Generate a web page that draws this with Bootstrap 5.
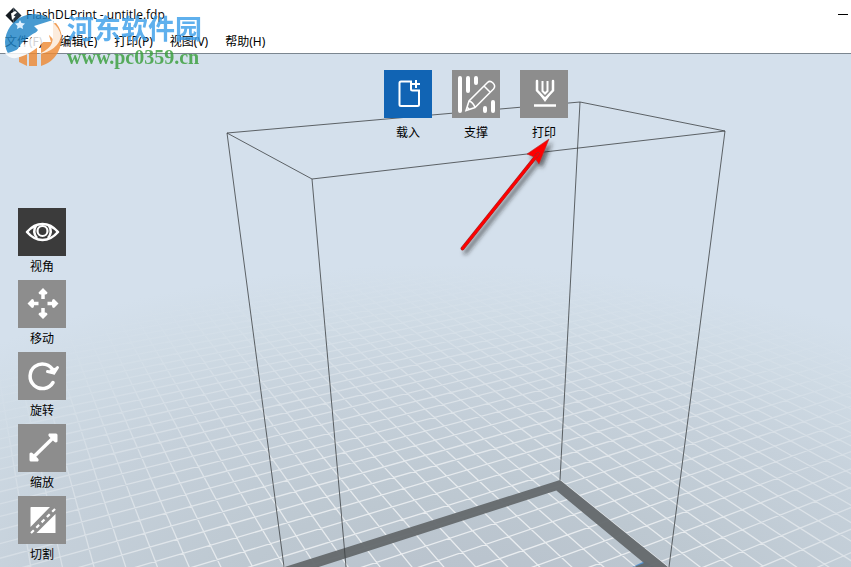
<!DOCTYPE html>
<html lang="zh-CN">
<head>
<meta charset="utf-8">
<meta name="viewport" content="width=device-width, initial-scale=1">
<title>FlashDLPrint - untitle.fdp</title>
<link href="https://cdn.jsdelivr.net/npm/bootstrap@5.3.0/dist/css/bootstrap.min.css" rel="stylesheet">
<style>
body{font-family:"Open Sans","Noto Sans CJK SC",sans-serif;font-size:12px;line-height:20px;color:#000}
.titlebar{height:30px;padding-left:5px}
.menubar{height:23px;padding-left:5px;gap:17px;font-family:"Noto Sans","Noto Sans CJK SC",sans-serif}
.app-head{border-bottom:1px solid #7b8690}
.viewport3d{background:#d4e0ec}
.scene{inset:0}
.pass{pointer-events:none}
.top-tools{padding:16px 0 0 384px;gap:20px}
.side-tools{padding-left:18px;margin-top:66px;gap:4px}
.tool{width:48px;font-family:"Noto Sans CJK SC",sans-serif;font-size:12px;line-height:20px;color:#000}
.tile{height:48px;background:#8d8d8d}
.tile-blue{background:#1164b4}
.tile-dark{background:#3b3b3b}
.top-tools .tile{margin-bottom:4px}
.tile svg{width:48px;height:48px;display:block;fill:none;stroke:#fff}
.mark-site{left:5px;top:11px;opacity:.82}
.mark-name{font:700 27px/34px "Noto Sans CJK SC",sans-serif;color:#3d9fea;margin-bottom:2px}
.mark-url{font:700 20px/20px "Liberation Serif",serif;color:#3a9f3c}
</style>
<script defer src="https://cdn.jsdelivr.net/npm/bootstrap@5.3.0/dist/js/bootstrap.bundle.min.js"></script>
</head>
<body class="min-vh-100 d-flex flex-column overflow-hidden position-relative">
<header class="app-head bg-white">
  <div class="titlebar d-flex align-items-center">
    <svg width="17" height="17" viewBox="0 0 17 17" aria-hidden="true"><path d="M8.500.5.5 8.500 8.500 16.500Z" fill="#151a20"/><path d="M8.500.5 16.500 8.500 8.500 16.500Z" fill="#27323d"/><path d="M6 6.500 10 4 12 5.500 8.500 8.500 10.500 9.500 7 13 6.500 9Z" fill="#fff"/></svg>
    <span class="ms-1">FlashDLPrint - untitle.fdp</span>
    <button class="btn p-0 border-0 rounded-0 ms-auto d-flex" aria-label="最小化"><svg width="13" height="16" viewBox="0 0 13 16"><path d="M0 7.500H10" stroke="#000"/></svg></button>
  </div>
  <nav class="menubar d-flex align-items-center">
    <a href="#" class="text-black text-decoration-none">文件(F)</a>
    <a href="#" class="text-black text-decoration-none">编辑(E)</a>
    <a href="#" class="text-black text-decoration-none">打印(P)</a>
    <a href="#" class="text-black text-decoration-none">视图(V)</a>
    <a href="#" class="text-black text-decoration-none">帮助(H)</a>
  </nav>
</header>

<main class="viewport3d flex-grow-1 position-relative">
  <svg class="scene position-absolute w-100 h-100" viewBox="0 54 851 513" preserveAspectRatio="xMidYMin slice" aria-hidden="true">
    <defs>
      <radialGradient id="floor" gradientUnits="userSpaceOnUse" cx="0" cy="0" r="1" gradientTransform="translate(480 620) rotate(2) scale(720 355)">
        <stop offset="0" stop-color="#b7c0cb"/><stop offset=".35" stop-color="#bdc8d1"/><stop offset=".65" stop-color="#c6d1db"/><stop offset=".85" stop-color="#cfdbe5"/><stop offset="1" stop-color="#d4e0ec"/>
      </radialGradient>
      <radialGradient id="fade" gradientUnits="userSpaceOnUse" cx="0" cy="0" r="1" gradientTransform="translate(480 620) rotate(2) scale(670 355)">
        <stop offset="0" stop-color="#fff" stop-opacity=".75"/><stop offset=".4" stop-color="#fff" stop-opacity=".62"/><stop offset=".7" stop-color="#fff" stop-opacity=".28"/><stop offset=".88" stop-color="#fff" stop-opacity=".08"/><stop offset="1" stop-color="#fff" stop-opacity="0"/>
      </radialGradient>
      <filter id="soft" x="-20%" y="-20%" width="150%" height="150%"><feDropShadow dx="3" dy="4" stdDeviation="2" flood-color="#222" flood-opacity=".6"/></filter>
    </defs>
    <rect y="54" width="851" height="513" fill="url(#floor)"/>
    <path d="M630 568 645 561 656 568Z" fill="#5793d0"/>
    <path id="grid" fill="none" stroke="url(#fade)" stroke-width="1.300"/>
    <path id="rim" fill="#656a6d" fill-opacity=".96" fill-rule="evenodd"/>
    <path d="M227 133 580 102 725 131 312 179ZM227 133 284 567M312 179 346 567M580 102 560 480M725 131 669 567" fill="none" stroke="#3c4043" stroke-width=".8"/>
  </svg>

  <div class="top-tools d-flex position-relative">
    <button class="tool btn p-0 border-0 rounded-0"><span class="tile tile-blue d-block">
      <svg viewBox="0 0 48 48"><path d="M27 11.500H17Q15.500 11.500 15.500 13V34.500Q15.500 36 17 36H33.500Q35 36 35 34.500V20.500H28.500Q27 20.500 27 19Z" stroke-width="2"/><path d="M32 10V18M28 14H36" stroke-width="2"/></svg></span><span>载入</span></button>
    <button class="tool btn p-0 border-0 rounded-0"><span class="tile d-block">
      <svg viewBox="0 0 48 48"><path d="M8 8V41M16 8V21M24 8V13M33 38V41M41 32V41" stroke-width="4" stroke-linecap="round"/><path d="M14 40.500 17 31 35.500 12.500Q38 10 41 13Q44 16 41.500 19L23 37.500ZM17 31Q21 32 23 37.500M32 16 38.500 22.500M15 37 17.500 39.500" stroke-width="1.500"/></svg></span><span>支撑</span></button>
    <button class="tool btn p-0 border-0 rounded-0"><span class="tile d-block">
      <svg viewBox="0 0 48 48"><path d="M17 11V20.500L25 29 33 20.500V11" stroke-width="2.500" stroke-linecap="round" stroke-linejoin="round"/><path d="M22.500 11V21L25 23.500 27.500 21V11" stroke-width="2"/><path d="M20 25 25 32 30 25 25 27Z" fill="#fff" stroke="none"/><path d="M14 35.500H36" stroke-width="2.500"/></svg></span><span>打印</span></button>
  </div>

  <div class="side-tools d-flex flex-column position-relative">
    <button class="tool btn p-0 border-0 rounded-0"><span class="tile tile-dark d-block">
      <svg viewBox="0 0 48 48"><path d="M9 24Q16 16 24.500 16T40 24Q33 32 24.500 32T9 24Z" stroke-width="2.600" stroke-linejoin="round"/><circle cx="24.500" cy="23" r="5" stroke-width="2.200"/><path d="M18 17.500Q14 24 19 30M31 17.500Q35 24 30 30" stroke-width="2.500"/></svg></span><span>视角</span></button>
    <button class="tool btn p-0 border-0 rounded-0"><span class="tile d-block">
      <svg viewBox="0 0 48 48"><path d="M25 19V11M25 28V36M20.500 23.500H13M29.500 23.500H37" stroke-width="3.500"/><path d="M25 8 29.500 12.500Q29.500 14.500 27.500 14.500H22.500Q20.500 14.500 20.500 12.500ZM25 39 29.500 34.500Q29.500 32.500 27.500 32.500H22.500Q20.500 32.500 20.500 34.500ZM9.500 23.500 14 19Q16 19 16 21V26Q16 28 14 28ZM40.500 23.500 36 19Q34 19 34 21V26Q34 28 36 28Z" fill="#fff" stroke="none"/></svg></span><span>移动</span></button>
    <button class="tool btn p-0 border-0 rounded-0"><span class="tile d-block">
      <svg viewBox="0 0 48 48"><path d="M35 30.500A12.300 12.300 0 1 1 35.500 19" stroke-width="3.500" stroke-linecap="round"/><path d="M29.500 19.500 36 21 39.500 15.500" stroke-width="3" stroke-linecap="round" stroke-linejoin="round"/><path d="M31 18 36.500 23 39 15Z" fill="#fff" stroke="none"/></svg></span><span>旋转</span></button>
    <button class="tool btn p-0 border-0 rounded-0"><span class="tile d-block">
      <svg viewBox="0 0 48 48"><path d="M15 33.500 36 13" stroke-width="3.500"/><path d="M31 9.500H38Q39.500 9.500 39.500 11V17.500Q38 19.500 36 17.500L31 12.500Q29.500 11 31 9.500ZM20 37.500H13Q11.500 37.500 11.500 36V29.500Q13 27.500 15 29.500L20 34.500Q21.500 36 20 37.500Z" fill="#fff" stroke="none"/></svg></span><span>缩放</span></button>
    <button class="tool btn p-0 border-0 rounded-0"><span class="tile d-block">
      <svg viewBox="0 0 48 48"><path d="M13 11H32L12.500 31V11.500ZM37.500 18V37H18.500Z" fill="#fff" stroke="none"/><path d="M13 37 38 12" stroke-width="2.200" stroke-dasharray="4 3.500"/></svg></span><span>切割</span></button>
  </div>

  <svg class="scene pass position-absolute w-100 h-100" viewBox="0 54 851 513" preserveAspectRatio="xMidYMin slice" aria-hidden="true">
    <g filter="url(#soft)"><path d="M549 139 527 154 534 157 539 164Z" fill="#fe0000" stroke="#a33" stroke-width=".6"/><path d="M462.500 248.500 538 154" stroke="#9a3030" stroke-width="3.800" stroke-linecap="round"/><path d="M462.500 248.500 538 154" stroke="#fe0000" stroke-width="2.800" stroke-linecap="round"/></g>
  </svg>
</main>

<div class="mark-site pass position-absolute d-flex align-items-start">
  <svg width="58" height="56" viewBox="0 0 58 56" aria-hidden="true">
    <path d="M0 31A29 29 0 0 1 49 11L33 17 36 19Q18 26 11 41L4 44Q0 38 0 31Z" fill="#1f85c8"/>
    <path d="M51 12Q59 22 56 33 52 50 36 55V31H46L43 21 45 13ZM14 51V42L22 38V55ZM24 55V37L32 33V55Z" fill="#ee8a34"/>
    <path d="M0 42Q15 42 33 19L29 15 48 9V28L44 24Q30 43 11 47 4 48 0 42Z" fill="#fff"/>
    <path d="M44 19Q54 33 36 42L32 44Q54 39 56 25Q54 16 48 12Z" fill="#fff" opacity=".8"/>
    <path d="M15 9 16.500 12 20 12.500 17.500 15 18 18 15 16.500 12 18 12.500 15 10 12.500 13.500 12Z" fill="#d9efff"/>
  </svg>
  <div class="ms-1">
    <div class="mark-name">河东软件园</div>
    <div class="mark-url">www.pc0359.cn</div>
  </div>
</div>

<script>
// Perspective floor: s runs along the 12-cell side of the plate, t along the 6.75-cell side.
const O=[560,480],V1=[2212,-42],V2=[-68,-26],a=.01191,b=.02174;
const P=(s,t)=>{const w=1+s*a+t*b;return[0,1].map(i=>((O[i]+s*a*V1[i]+t*b*V2[i])/w).toFixed(2)).join(' ')};
let d='';
for(let s=-70;s<=90;s++){const t0=(.3-1-s*a)/b;d+='M'+P(s,t0)+'L'+P(s,110)}
for(let k=-40;k<=75;k++){const t=k-.375,s0=(.3-1-t*b)/a;d+='M'+P(s0,t)+'L'+P(130,t)}
document.getElementById('grid').setAttribute('d',d);
const ring=m=>'M'+[[-m,-m],[-12+m,-m],[-12+m,-6.75+m],[-m,-6.75+m]].map(p=>P(...p)).join('L')+'Z';
document.getElementById('rim').setAttribute('d',ring(0)+ring(.6));
</script>
</body>
</html>
